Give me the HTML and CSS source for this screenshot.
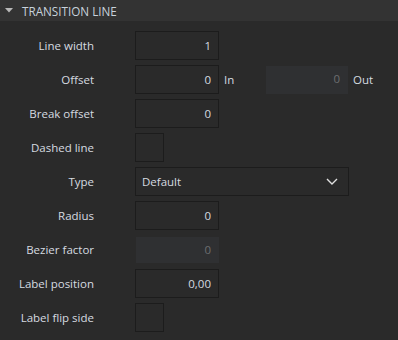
FILE: index.html
```html
<html>
    <head>
        <link rel="stylesheet" href="styles.css">
    </head>
    <body>
        <div class="header">
            <svg class="caret" width="8" height="5" viewBox="0 0 8 5"><path d="M0 0H8L4 4.5Z" fill="#b8b8b8"/></svg>
            <span class="title">TRANSITION LINE</span>
        </div>
        <div class="props">
            <div class="row">
                <div class="label">Line width</div>
                <div class="field">1</div>
            </div>
            <div class="row">
                <div class="label">Offset</div>
                <div class="field">0</div>
                <span class="unit in">In</span>
                <div class="field off wide">0</div>
                <span class="unit">Out</span>
            </div>
            <div class="row">
                <div class="label">Break offset</div>
                <div class="field">0</div>
            </div>
            <div class="row">
                <div class="label">Dashed line</div>
                <div class="check"></div>
            </div>
            <div class="row">
                <div class="label">Type</div>
                <div class="select">
                    <span>Default</span>
                    <svg width="12" height="7" viewBox="0 0 12 7"><path d="M1 1L6 6L11 1" fill="none" stroke="#e0e0e0" stroke-width="1.4"/></svg>
                </div>
            </div>
            <div class="row">
                <div class="label">Radius</div>
                <div class="field">0</div>
            </div>
            <div class="row">
                <div class="label">Bezier factor</div>
                <div class="field off">0</div>
            </div>
            <div class="row">
                <div class="label">Label position</div>
                <div class="field">0,00</div>
            </div>
            <div class="row">
                <div class="label">Label flip side</div>
                <div class="check"></div>
            </div>
        </div>
    </body>
</html>
```
FILE: styles.css
```css
*{
    margin:0;
    padding:0;
    box-sizing:border-box;
}
body{
    background-color:#2a2a2a;
    font-family:"Open Sans", "Noto Sans", sans-serif;
    font-size:11.5px;
    color:#d6dbe0;
}
.header{
    height:21px;
    background-color:#333333;
    display:flex;
    align-items:center;
}
.caret{
    margin-left:5px;
    margin-right:9px;
}
.title{
    color:#c8d2dc;
    font-size:11.7px;
}
.props{
    padding-top:10px;
    display:flex;
    flex-direction:column;
    gap:5px;
}
.row{
    display:flex;
    align-items:center;
    height:29px;
}
.label{
    width:94px;
    margin-right:41px;
    text-align:right;
}
.field{
    width:84px;
    height:29px;
    border:1px solid #1c1c1c;
    text-align:right;
    padding-right:7px;
    line-height:27px;
}
.field.off{
    border:none;
    background-color:#2f3032;
    color:#6c6e70;
    height:26px;
    line-height:26px;
    width:83px;
    margin-left:1px;
    padding-right:8px;
}
.field.wide{
    width:82px;
    margin-left:0;
    height:28px;
}
.unit{
    margin-left:5px;
}
.unit.in{
    width:42px;
}
.check{
    width:29px;
    height:29px;
    border:1px solid #1c1c1c;
}
.select{
    width:214px;
    height:29px;
    border:1px solid #1c1c1c;
    display:flex;
    align-items:center;
    justify-content:space-between;
    padding-left:6px;
    padding-right:10px;
}
```
